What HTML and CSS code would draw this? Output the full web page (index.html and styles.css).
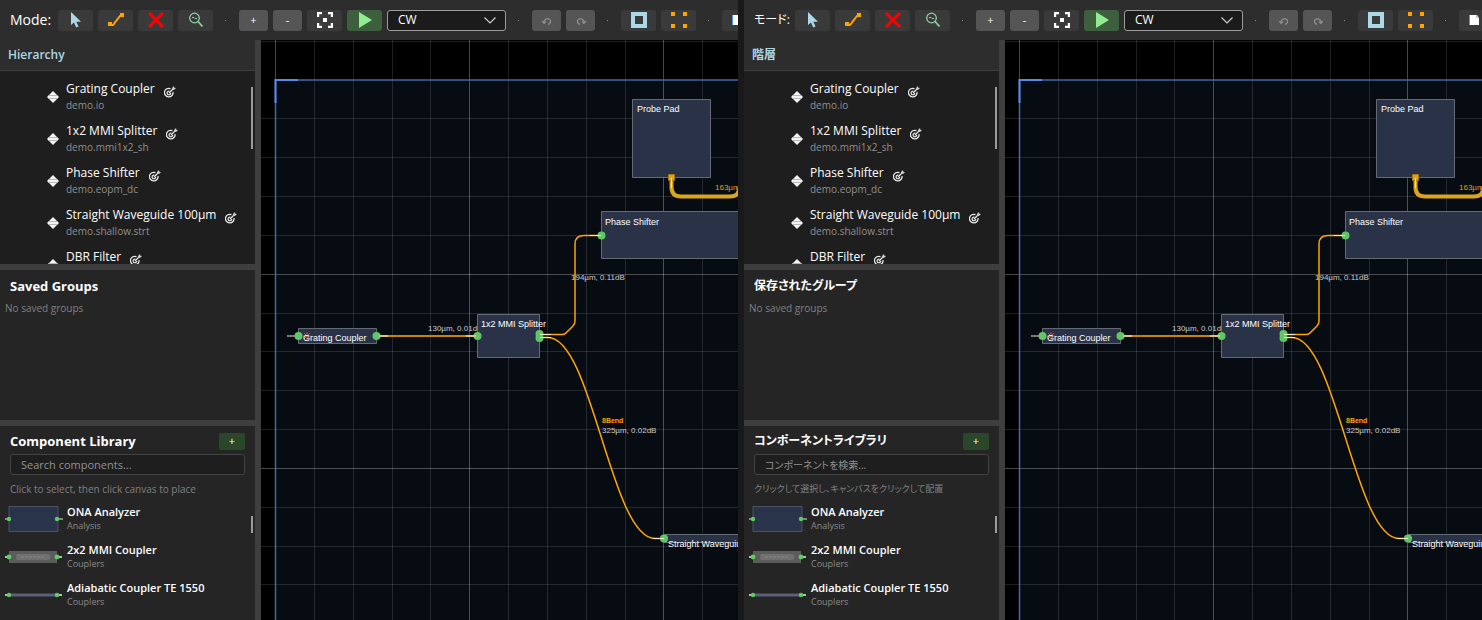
FILE: index.html
```html
<!DOCTYPE html>
<html lang="en">
<head>
<meta charset="utf-8">
<title>Photonic Layout Editor</title>
<link rel="stylesheet" href="styles.css">
</head>
<body>
<svg class="defs" aria-hidden="true">
  <defs>
    <symbol id="i-select" viewBox="0 0 16 16"><path fill="#add8e6" d="M3 0v13l3-2.500 2.200 5 2.300-1-2.200-4.800H13z"/></symbol>
    <symbol id="i-wire" viewBox="0 0 16 16"><path d="M2 13H5L12 4H15" fill="none" stroke="#ffa500" stroke-width="2"/><path fill="#ffa500" d="M0 10h4v4H0zM12 1h4v4h-4z"/></symbol>
    <symbol id="i-delete" viewBox="0 0 16 16"><path d="M1 1L15 15M15 1L1 15" stroke="#f00" stroke-width="3"/></symbol>
    <symbol id="i-zoom" viewBox="0 0 16 16"><circle cx="6.500" cy="6" r="4.800" fill="none" stroke="#8fd0a5" stroke-width="1.300"/><path d="M10 9.500L14.500 14.500" stroke="#8fd0a5" stroke-width="1.800"/><path d="M4 5.500h2l1 1h2" fill="none" stroke="#8fd0a5"/></symbol>
    <symbol id="i-fit" viewBox="0 0 16 16"><path d="M1 5V1H5M11 1h4v4M15 11v4h-4M5 15H1v-4" fill="none" stroke="#fff" stroke-width="2.400"/><path fill="#fff" d="M6 6h4v4H6z"/></symbol>
    <symbol id="i-play" viewBox="0 0 16 16"><path fill="#90ee90" d="M2 0L15 8 2 16z"/></symbol>
    <symbol id="i-undo" viewBox="0 0 16 16"><path d="M5 11C4 6 12 5.500 11.500 9.500Q11.400 12 9 12.300M3.200 9L5 11.300 7.200 9.500" fill="none" stroke="#909090" stroke-width="1.200"/></symbol>
    <symbol id="i-box" viewBox="0 0 16 16"><path d="M2 2h12v12H2z" fill="none" stroke="#add8e6" stroke-width="4"/></symbol>
    <symbol id="i-corners" viewBox="0 0 16 16"><path fill="#ffa500" d="M0 0h4v4H0zM12 0h4v4h-4zM0 12h4v4H0zM12 12h4v4h-4z"/></symbol>
    <symbol id="i-doc" viewBox="0 0 16 16"><path fill="#fff" d="M1 3h7l2 3v7H1z"/><path fill="#d8c0a8" d="M7 3l3 3H7z"/><path fill="#4a9ad4" d="M0 3h1v10H0z"/></symbol>
    <symbol id="i-diamond" viewBox="0 0 12 12"><path fill="#f2f2f2" d="M6 0l6 6-6 6-6-6z"/><path stroke="#aaa" stroke-width=".8" d="M1 4.500H11M1 7.500H11"/></symbol>
    <symbol id="i-target" viewBox="0 0 12 12"><g fill="none" stroke="#ececec"><path stroke-width="1.300" d="M6.500 2.700A4.300 4.300 0 1 0 9 6"/><path stroke-width="1.200" d="M5.300 5.200A1.800 1.800 0 1 0 6.700 7M5 7L9.500 2.500"/></g><path fill="#ccc" d="M8 2l2-2 .3 1.700 1.700.3-2 2-1.800-.2z"/></symbol>
    <symbol id="i-chevron" viewBox="0 0 12 7"><path d="M.500 .500L6 6 11.500 .500" fill="none" stroke="#ccc" stroke-width="1.200"/></symbol>
    <symbol id="t-ona" viewBox="0 0 58 26"><path fill="#293349" stroke="#4a5268" d="M4 .500h49v25H4z"/><path stroke="#7d8a80" stroke-width="2" d="M0 13H4M54 13H58"/><circle cx="4" cy="13" r="2.200" fill="#5fcc62"/><circle cx="52" cy="13" r="2.200" fill="#5fcc62"/></symbol>
    <symbol id="t-mmi" viewBox="0 0 58 26"><path fill="#5c5c5c" d="M4 7h48v12H4z"/><rect x="11" y="10" width="34" height="6" rx="2" fill="#707070"/><path stroke="#7c7c7c" stroke-width="2" stroke-dasharray="3 1" d="M16 13H40"/><path stroke="#a8c4aa" stroke-width="2" d="M0 13H4M53 13H57"/><circle cx="4" cy="13" r="2.400" fill="#5fcc62"/><circle cx="52" cy="13" r="2.400" fill="#5fcc62"/></symbol>
    <symbol id="t-adi" viewBox="0 0 58 26"><path stroke="#596078" stroke-width="3" d="M4 13H52"/><path stroke="#a8c4aa" stroke-width="2" d="M0 13H4M53 13H57"/><circle cx="4" cy="13" r="2.200" fill="#5fcc62"/><circle cx="52" cy="13" r="2.200" fill="#5fcc62"/></symbol>

    <g id="grid">
      <path fill="#070b12" d="M14 40H3000V2000H14z"/>
      <path class="grid-minor" d="M53.500 0V2000M92.500 0V2000M131.500 0V2000M169.500 0V2000M247.500 0V2000M286.500 0V2000M325.500 0V2000M364.500 0V2000M441.500 0V2000M480.500 0V2000M0 1.500H3000M0 78.500H3000M0 117.500H3000M0 156.500H3000M0 195.500H3000M0 273.500H3000M0 311.500H3000M0 350.500H3000M0 389.500H3000M0 467.500H3000M0 506.500H3000M0 544.500H3000"/>
      <path class="grid-major" d="M14.500 0V2000M208.500 0V2000M402.500 0V2000M0 234.500H3000M0 428.500H3000"/>
      <path fill="none" stroke="#4668a8" stroke-width="1.500" d="M3000 40H14.500V2000"/>
      <path fill="none" stroke="#5a8ae8" stroke-width="2" d="M37 40H14.500V63"/>
    </g>
    <g id="wires" fill="none">
      <path stroke="#daa520" stroke-width="4" d="M410.500 140V147Q410.500 156.500 420 156.500H469Q478.500 156.500 478.500 147"/>
      <path stroke="#c98300" stroke-width="2" d="M116 296H216"/>
      <path stroke="#ffa500" stroke-width="1.500" d="M279 294.500H301Q304 294.500 306 292L312 286Q314 284 314 281V204Q314 195.500 323 195.500H340M279 297.500H287C331 297.500 350 498.500 394 498.500H403"/>
    </g>
    <g id="nodes">
      <g fill="#293247" stroke="#666a73">
        <path d="M371.500 59.500h78v78h-78zM340.500 171.500H540V218.500H340.500zM216.500 274.500h62v43h-62zM37.500 288.500h78v15h-78zM403.500 494.500H600V502.500H403.500z"/>
      </g>
      <path stroke="#777" d="M26 296H37" stroke-width="2"/>
      <g fill="none" stroke="#b0524c"><path d="M42 296H50M46 292V300M43 293L49 299M49 293L43 299"/></g>
      <path fill="#daa520" stroke="#a87808" d="M407.500 134.500h6v6h-6z"/>
      <g fill="#5fc864"><circle cx="37.500" cy="296" r="4"/><circle cx="115.500" cy="296" r="4"/><circle cx="216.500" cy="296" r="4"/><circle cx="278.500" cy="294" r="4"/><circle cx="278.500" cy="298" r="4"/><circle cx="340.500" cy="195.500" r="4"/><circle cx="403" cy="498.500" r="4"/></g>
      <path stroke="#f4e6c4" d="M410.500 138V148M279 294.500H290M279 297.500H290M329 195.500H340M392 498.500H403"/>
      <path stroke="#dcc090" stroke-width="2" d="M118 296H127M205 296H215"/>
    </g>
  </defs>
</svg>

<div class="compare">
  <section class="app" lang="en">
    <div class="toolbar">
      <span class="mode">Mode:</span>
      <button class="tool" aria-label="Select"><svg class="icon"><use href="#i-select"/></svg></button>
      <button class="tool" aria-label="Connect"><svg class="icon"><use href="#i-wire"/></svg></button>
      <button class="tool" aria-label="Delete"><svg class="icon"><use href="#i-delete"/></svg></button>
      <button class="tool" aria-label="Inspect"><svg class="icon"><use href="#i-zoom"/></svg></button>
      <span class="sep"></span>
      <button class="tool step">+</button>
      <button class="tool step">-</button>
      <button class="tool" aria-label="Fit"><svg class="icon"><use href="#i-fit"/></svg></button>
      <button class="tool run" aria-label="Run"><svg class="icon"><use href="#i-play"/></svg></button>
      <span class="combo"><select aria-label="Source"><option>CW</option></select><svg class="chevron"><use href="#i-chevron"/></svg></span>
      <span class="sep"></span>
      <button class="tool step" aria-label="Undo"><svg class="icon"><use href="#i-undo"/></svg></button>
      <button class="tool step" aria-label="Redo"><svg class="icon flip"><use href="#i-undo"/></svg></button>
      <span class="sep"></span>
      <button class="tool" aria-label="Outline"><svg class="icon"><use href="#i-box"/></svg></button>
      <button class="tool" aria-label="Corners"><svg class="icon"><use href="#i-corners"/></svg></button>
      <span class="sep"></span>
      <button class="tool" aria-label="New"><svg class="icon"><use href="#i-doc"/></svg></button>
    </div>
    <div class="body">
      <aside class="sidebar">
        <h2 class="tree-title">Hierarchy</h2>
        <div class="tree">
          <ul class="tree-list">
            <li class="node"><svg class="mark"><use href="#i-diamond"/></svg><div><div class="node-name">Grating Coupler</div><div class="node-type">demo.io</div></div><svg class="mark target"><use href="#i-target"/></svg></li>
            <li class="node"><svg class="mark"><use href="#i-diamond"/></svg><div><div class="node-name">1x2 MMI Splitter</div><div class="node-type">demo.mmi1x2_sh</div></div><svg class="mark target"><use href="#i-target"/></svg></li>
            <li class="node"><svg class="mark"><use href="#i-diamond"/></svg><div><div class="node-name">Phase Shifter</div><div class="node-type">demo.eopm_dc</div></div><svg class="mark target"><use href="#i-target"/></svg></li>
            <li class="node"><svg class="mark"><use href="#i-diamond"/></svg><div><div class="node-name">Straight Waveguide 100µm</div><div class="node-type">demo.shallow.strt</div></div><svg class="mark target"><use href="#i-target"/></svg></li>
            <li class="node"><svg class="mark"><use href="#i-diamond"/></svg><div><div class="node-name">DBR Filter</div></div><svg class="mark target"><use href="#i-target"/></svg></li>
          </ul>
          <span class="thumb thumb-tree"></span>
        </div>
        <div class="groups">
          <h2 class="title">Saved Groups</h2>
          <p class="empty">No saved groups</p>
        </div>
        <div class="library">
          <div class="library-head"><h2 class="title">Component Library</h2><button class="add">+</button></div>
          <input class="search" type="text" aria-label="Search components" placeholder="Search components...">
          <p class="hint">Click to select, then click canvas to place</p>
          <ul class="parts">
            <li class="part"><svg class="preview"><use href="#t-ona"/></svg><div><div class="part-name">ONA Analyzer</div><div class="part-kind">Analysis</div></div></li>
            <li class="part"><svg class="preview"><use href="#t-mmi"/></svg><div><div class="part-name">2x2 MMI Coupler</div><div class="part-kind">Couplers</div></div></li>
            <li class="part"><svg class="preview"><use href="#t-adi"/></svg><div><div class="part-name">Adiabatic Coupler TE 1550</div><div class="part-kind">Couplers</div></div></li>
          </ul>
          <span class="thumb thumb-library"></span>
        </div>
      </aside>
      <main class="stage">
        <svg class="canvas">
          <use href="#grid"/>
          <use href="#wires"/>
          <text class="measure" x="167" y="291">130µm, 0.01dB</text>
          <use href="#nodes"/>
          <text class="label" x="376" y="72">Probe Pad</text>
          <text class="label" x="344" y="185">Phase Shifter</text>
          <text class="label" x="42" y="301">Grating Coupler</text>
          <text class="label" x="220" y="287">1x2 MMI Splitter</text>
          <text class="label" x="407" y="507">Straight Waveguide 100µm</text>
          <text class="measure metal" x="454" y="150">163µm</text>
          <text class="measure" x="310" y="240">194µm, 0.11dB</text>
          <text class="measure bend" x="341" y="383">8Bend</text>
          <text class="measure" x="341" y="393">325µm, 0.02dB</text>
        </svg>
      </main>
    </div>
  </section>

  <section class="app" lang="ja">
    <div class="toolbar">
      <span class="mode">モード:</span>
      <button class="tool" aria-label="選択"><svg class="icon"><use href="#i-select"/></svg></button>
      <button class="tool" aria-label="接続"><svg class="icon"><use href="#i-wire"/></svg></button>
      <button class="tool" aria-label="削除"><svg class="icon"><use href="#i-delete"/></svg></button>
      <button class="tool" aria-label="検査"><svg class="icon"><use href="#i-zoom"/></svg></button>
      <span class="sep"></span>
      <button class="tool step">+</button>
      <button class="tool step">-</button>
      <button class="tool" aria-label="全体表示"><svg class="icon"><use href="#i-fit"/></svg></button>
      <button class="tool run" aria-label="実行"><svg class="icon"><use href="#i-play"/></svg></button>
      <span class="combo"><select aria-label="光源"><option>CW</option></select><svg class="chevron"><use href="#i-chevron"/></svg></span>
      <span class="sep"></span>
      <button class="tool step" aria-label="元に戻す"><svg class="icon"><use href="#i-undo"/></svg></button>
      <button class="tool step" aria-label="やり直し"><svg class="icon flip"><use href="#i-undo"/></svg></button>
      <span class="sep"></span>
      <button class="tool" aria-label="外枠"><svg class="icon"><use href="#i-box"/></svg></button>
      <button class="tool" aria-label="四隅"><svg class="icon"><use href="#i-corners"/></svg></button>
      <span class="sep"></span>
      <button class="tool" aria-label="新規"><svg class="icon"><use href="#i-doc"/></svg></button>
    </div>
    <div class="body">
      <aside class="sidebar">
        <h2 class="tree-title">階層</h2>
        <div class="tree">
          <ul class="tree-list">
            <li class="node"><svg class="mark"><use href="#i-diamond"/></svg><div><div class="node-name">Grating Coupler</div><div class="node-type">demo.io</div></div><svg class="mark target"><use href="#i-target"/></svg></li>
            <li class="node"><svg class="mark"><use href="#i-diamond"/></svg><div><div class="node-name">1x2 MMI Splitter</div><div class="node-type">demo.mmi1x2_sh</div></div><svg class="mark target"><use href="#i-target"/></svg></li>
            <li class="node"><svg class="mark"><use href="#i-diamond"/></svg><div><div class="node-name">Phase Shifter</div><div class="node-type">demo.eopm_dc</div></div><svg class="mark target"><use href="#i-target"/></svg></li>
            <li class="node"><svg class="mark"><use href="#i-diamond"/></svg><div><div class="node-name">Straight Waveguide 100µm</div><div class="node-type">demo.shallow.strt</div></div><svg class="mark target"><use href="#i-target"/></svg></li>
            <li class="node"><svg class="mark"><use href="#i-diamond"/></svg><div><div class="node-name">DBR Filter</div></div><svg class="mark target"><use href="#i-target"/></svg></li>
          </ul>
          <span class="thumb thumb-tree"></span>
        </div>
        <div class="groups">
          <h2 class="title">保存されたグループ</h2>
          <p class="empty">No saved groups</p>
        </div>
        <div class="library">
          <div class="library-head"><h2 class="title">コンポーネントライブラリ</h2><button class="add">+</button></div>
          <input class="search" type="text" aria-label="コンポーネントを検索" placeholder="コンポーネントを検索...">
          <p class="hint">クリックして選択し、キャンバスをクリックして配置</p>
          <ul class="parts">
            <li class="part"><svg class="preview"><use href="#t-ona"/></svg><div><div class="part-name">ONA Analyzer</div><div class="part-kind">Analysis</div></div></li>
            <li class="part"><svg class="preview"><use href="#t-mmi"/></svg><div><div class="part-name">2x2 MMI Coupler</div><div class="part-kind">Couplers</div></div></li>
            <li class="part"><svg class="preview"><use href="#t-adi"/></svg><div><div class="part-name">Adiabatic Coupler TE 1550</div><div class="part-kind">Couplers</div></div></li>
          </ul>
          <span class="thumb thumb-library"></span>
        </div>
      </aside>
      <main class="stage">
        <svg class="canvas">
          <use href="#grid"/>
          <use href="#wires"/>
          <text class="measure" x="167" y="291">130µm, 0.01dB</text>
          <use href="#nodes"/>
          <text class="label" x="376" y="72">Probe Pad</text>
          <text class="label" x="344" y="185">Phase Shifter</text>
          <text class="label" x="42" y="301">Grating Coupler</text>
          <text class="label" x="220" y="287">1x2 MMI Splitter</text>
          <text class="label" x="407" y="507">Straight Waveguide 100µm</text>
          <text class="measure metal" x="454" y="150">163µm</text>
          <text class="measure" x="310" y="240">194µm, 0.11dB</text>
          <text class="measure bend" x="341" y="383">8Bend</text>
          <text class="measure" x="341" y="393">325µm, 0.02dB</text>
        </svg>
      </main>
    </div>
  </section>
</div>
</body>
</html>
```

FILE: styles.css
```css
* { box-sizing: border-box; }

body {
  margin: 0;
  background: #191919;
  color: #fff;
  font: 12px/16px "Open Sans", "Noto Sans CJK JP", sans-serif;
}

h2, p, ul { margin: 0; padding: 0; }
ul { list-style: none; }
button, input, select { font: inherit; color: inherit; }
svg { display: block; flex: none; }
.defs { position: absolute; width: 0; height: 0; }

.compare {
  display: grid;
  grid-template-columns: 1fr 1fr;
  gap: 6px;
  height: 100vh;
}

.app {
  display: flex;
  flex-direction: column;
  min-width: 0;
  overflow: hidden;
}
.app:lang(ja) { font-feature-settings: "palt"; }

/* Toolbar */
.toolbar {
  display: flex;
  flex: none;
  align-items: center;
  gap: 5px;
  height: 40px;
  padding-left: 10px;
  background: #2d2d2d;
}
.mode { flex: none; width: 43px; font-size: 14px; white-space: nowrap; }
.mode:lang(ja) { width: 36px; font-size: 12px; }
.tool {
  display: flex;
  flex: none;
  align-items: center;
  justify-content: center;
  width: 35px;
  height: 21px;
  padding: 0;
  border: 0;
  border-radius: 3px;
  background: #3a3a3a;
}
.step { width: 29px; background: #555; font-size: 11px; }
.run { background: #3d5f3d; }
.icon { width: 16px; height: 16px; }
.flip { transform: scaleX(-1); }
.sep { position: relative; flex: none; width: 16px; height: 16px; }
.sep::after {
  content: "";
  position: absolute;
  top: 8px;
  left: 7px;
  width: 1px;
  height: 1px;
  background: #888;
}
.combo { position: relative; flex: none; width: 119px; }
.combo select {
  display: block;
  width: 100%;
  height: 21px;
  padding: 0 10px;
  border: 1px solid #9c9c9c;
  border-radius: 3px;
  appearance: none;
  background: #1b1b1b;
}
.chevron { position: absolute; top: 7px; right: 10px; width: 12px; height: 7px; pointer-events: none; }

/* Sidebar */
.body { display: flex; flex: 1; min-height: 0; }
.sidebar {
  display: grid;
  flex: none;
  grid-template-rows: 31px 199fr 156fr 194fr;
  width: 261px;
  border-right: 6px solid #3e3e3e;
  background: #252525;
}
.tree-title {
  padding: 7px 8px;
  border-bottom: 1px solid #3e3e3e;
  background: #2d2d2d;
  color: #add8e6;
  font-size: 12px;
  font-weight: 600;
}
.tree { position: relative; min-height: 0; overflow: hidden; border-bottom: 6px solid #3e3e3e; background: #1e1e1e; }
.tree-list { padding-top: 5px; }
.node { display: flex; align-items: center; gap: 7px; height: 42px; padding-left: 47px; white-space: nowrap; }
.node:last-child { align-items: flex-start; padding-top: 5px; }
.node:last-child .mark { margin-top: 10px; }
.node:last-child .target { margin-top: 5px; }
.mark { width: 12px; height: 12px; }
.target { margin: 0 0 10px 2px; }
.node-type { color: #909090; font-size: 10px; }

.thumb { position: absolute; right: 2px; width: 2px; background: #9a9a9a; }
.thumb-tree { top: 16px; height: 62px; }
.thumb-library { top: 90px; height: 17px; }

.title { font-size: 13px; line-height: 20px; font-weight: 700; white-space: nowrap; }
.title:lang(ja) { font-size: 12px; }
.groups { min-height: 0; padding: 6px 10px; border-bottom: 6px solid #3e3e3e; }
.empty { margin: 4px 0 0 -5px; color: #808080; font-size: 10px; }

.library { position: relative; min-height: 0; padding: 5px 10px 0; overflow: hidden; }
.library-head { display: flex; align-items: center; justify-content: space-between; }
.add { width: 26px; height: 17px; padding: 0; border: 0; border-radius: 2px; background: #2a472a; font-size: 11px; line-height: 16px; }
.search {
  display: block;
  width: 100%;
  height: 21px;
  margin-top: 3px;
  padding: 0 10px;
  border: 1px solid #434343;
  border-radius: 3px;
  background: #1e1e1e;
  font-size: 11px;
}
.search:lang(ja) { font-size: 10px; }
.search::placeholder { color: #929292; opacity: 1; }
.hint { margin-top: 6px; color: #808080; font-size: 10px; white-space: nowrap; }
.hint:lang(ja) { font-size: 9px; }
.parts { margin: 3px 0 0 -5px; }
.part { display: flex; align-items: center; gap: 4px; height: 38px; white-space: nowrap; }
.preview { width: 58px; height: 26px; }
.part-name { font-size: 11px; line-height: 14px; font-weight: 600; }
.part-kind { color: #8a8a8a; font-size: 9px; line-height: 14px; }

/* Canvas */
.stage { flex: 1; min-width: 0; background: #000; }
.canvas { width: 100%; height: 100%; font-family: "Liberation Sans", Arial, sans-serif; }
.grid-minor { stroke: #fff; stroke-opacity: .12; }
.grid-major { stroke: #fff; stroke-opacity: .28; }
.label { fill: #fff; font-size: 9px; }
.measure { fill: #ccc; font-size: 8px; }
.metal { fill: #daa520; }
.bend { fill: #ffa500; font-size: 7px; font-weight: 700; }
```
